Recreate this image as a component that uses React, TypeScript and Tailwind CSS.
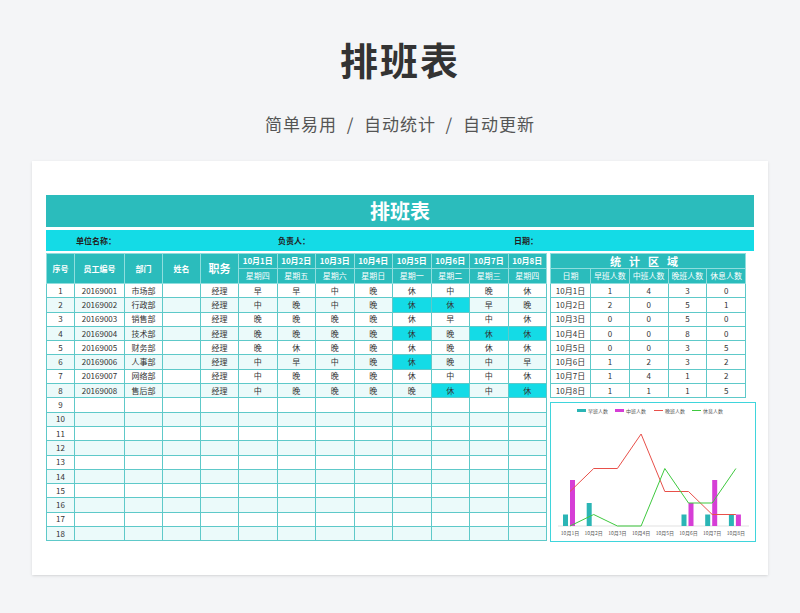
import React from "react";

const shifts = [
  ["早","早","中","晚","休","中","晚","休"],
  ["中","晚","中","晚","休","休","早","晚"],
  ["晚","晚","晚","晚","休","早","中","休"],
  ["晚","晚","晚","晚","休","晚","休","休"],
  ["晚","休","晚","晚","休","晚","休","休"],
  ["中","早","中","晚","休","晚","中","早"],
  ["中","晚","晚","晚","休","中","中","休"],
  ["中","晚","晚","晚","晚","休","中","休"],
];
const hl: Record<number, number[]> = { 1: [4, 5], 3: [4, 6, 7], 5: [4], 7: [5, 7] };
const depts = ["市场部","行政部","销售部","技术部","财务部","人事部","网络部","售后部"];
const days = ["星期四","星期五","星期六","星期日","星期一","星期二","星期三","星期四"];
const stats = [[1,4,3,0],[2,0,5,1],[0,0,5,0],[0,0,8,0],[0,0,3,5],[1,2,3,2],[1,4,1,2],[1,1,1,5]];

const td = "border border-[#5ec9c9] text-center h-[14.3px] p-0 leading-none";
const th = "border border-[#8fdede] text-center text-white font-bold p-0 leading-none";

function Chart() {
  const cx = (i: number) => 19 + i * 23.7;
  const y = (v: number) => 123 - v * 11.5;
  const line = (k: number) => stats.map((s, i) => `${cx(i)},${y(s[k])}`).join(" ");
  return (
    <svg width="204" height="138" viewBox="0 0 204 138">
      <g fontSize="5" fill="#555">
        <rect x="26" y="6" width="9" height="3" fill="#2bb5b5" /><text x="37" y="9.5">早班人数</text>
        <rect x="64" y="6" width="9" height="3" fill="#d63ed6" /><text x="75" y="9.5">中班人数</text>
        <line x1="103" y1="7.5" x2="112" y2="7.5" stroke="#e8504a" strokeWidth="1" /><text x="114" y="9.5">晚班人数</text>
        <line x1="141" y1="7.5" x2="150" y2="7.5" stroke="#3fc93f" strokeWidth="1" /><text x="152" y="9.5">休息人数</text>
      </g>
      <line x1="7" y1="123" x2="198" y2="123" stroke="#ccc" strokeWidth="0.6" />
      {stats.map((s, i) => (
        <g key={i}>
          {s[0] > 0 && <rect x={cx(i) - 7} y={y(s[0])} width="5" height={s[0] * 11.5} fill="#2bb5b5" />}
          {s[1] > 0 && <rect x={cx(i)} y={y(s[1])} width="5" height={s[1] * 11.5} fill="#d63ed6" />}
          <text x={cx(i)} y="132" fontSize="5" textAnchor="middle" fill="#555">{`10月${i + 1}日`}</text>
        </g>
      ))}
      <polyline points={line(2)} fill="none" stroke="#e8504a" strokeWidth="1" />
      <polyline points={line(3)} fill="none" stroke="#3fc93f" strokeWidth="1" />
    </svg>
  );
}

export default function App() {
  return (
    <div className="w-[800px] h-[613px] bg-[#f4f5f7] flex flex-col items-center overflow-hidden" style={{ fontFamily: '"Noto Sans CJK SC", "Noto Sans", sans-serif' }}>
      <div className="mt-[34px] text-[38px] font-bold text-[#333] leading-[50px] tracking-[2px]">排班表</div>
      <div className="mt-[28px] text-[17px] text-[#555] leading-[24px] tracking-[1px]">简单易用 &nbsp;/&nbsp; 自动统计 &nbsp;/&nbsp; 自动更新</div>
      <div className="mt-[25px] w-[736px] h-[414px] bg-white shadow-sm px-[14px] pt-[34px]">
        <div className="h-[32px] bg-[#2bbcbc] text-white text-[20px] font-bold flex items-center justify-center">排班表</div>
        <div className="mt-[3px] h-[21px] bg-[#14dbe6] flex items-center text-[8px] font-bold text-[#222]">
          <span className="ml-[30px]">单位名称：</span>
          <span className="ml-[162px]">负责人：</span>
          <span className="ml-[204px]">日期：</span>
        </div>
        <div className="mt-[2px] flex items-start">
          <table className="border-collapse table-fixed text-[8px] text-[#333] w-[500px]">
            <colgroup>
              <col className="w-[28px]" /><col className="w-[50px]" /><col className="w-[38px]" /><col className="w-[38px]" /><col className="w-[38px]" />
              {days.map((_, i) => <col key={i} className="w-[38.5px]" />)}
            </colgroup>
            <thead>
              <tr className="bg-[#2bbcbc] h-[15px]">
                <th rowSpan={2} className={th}>序号</th>
                <th rowSpan={2} className={th}>员工编号</th>
                <th rowSpan={2} className={th}>部门</th>
                <th rowSpan={2} className={th}>姓名</th>
                <th rowSpan={2} className={th + " text-[11px]"}>职务</th>
                {days.map((_, i) => <th key={i} className={th}>{`10月${i + 1}日`}</th>)}
              </tr>
              <tr className="bg-[#2bbcbc] h-[15px]">
                {days.map((d, i) => <th key={i} className={th + " font-normal"}>{d}</th>)}
              </tr>
            </thead>
            <tbody>
              {Array.from({ length: 18 }).map((_, r) => (
                <tr key={r} className={r % 2 === 0 ? "bg-white" : "bg-[#ebfafa]"}>
                  <td className={td}>{r + 1}</td>
                  <td className={td}>{r < 8 ? `2016900${r + 1}` : ""}</td>
                  <td className={td}>{r < 8 ? depts[r] : ""}</td>
                  <td className={td}></td>
                  <td className={td}>{r < 8 ? "经理" : ""}</td>
                  {days.map((_, c) => (
                    <td key={c} className={td + (hl[r]?.includes(c) ? " bg-[#14dbe6]" : "")}>{r < 8 ? shifts[r][c] : ""}</td>
                  ))}
                </tr>
              ))}
            </tbody>
          </table>
          <div className="ml-[3px] flex flex-col">
            <table className="border-collapse table-fixed text-[8px] text-[#333] w-[196px]">
              <colgroup><col className="w-[40px]" /><col /><col /><col /><col /></colgroup>
              <thead>
                <tr className="bg-[#2bbcbc] h-[15px]"><th colSpan={5} className={th + " text-[11px] tracking-[8px]"}>统计区域</th></tr>
                <tr className="bg-[#2bbcbc] h-[15px]">
                  {["日期","早班人数","中班人数","晚班人数","休息人数"].map(h => <th key={h} className={th + " font-normal"}>{h}</th>)}
                </tr>
              </thead>
              <tbody>
                {stats.map((s, i) => (
                  <tr key={i} className="bg-white">
                    <td className={td}>{`10月${i + 1}日`}</td>
                    {s.map((v, j) => <td key={j} className={td}>{v}</td>)}
                  </tr>
                ))}
              </tbody>
            </table>
            <div className="mt-[4px] w-[206px] h-[140px] border border-[#3fd5dc] bg-white">
              <Chart />
            </div>
          </div>
        </div>
      </div>
    </div>
  );
}
